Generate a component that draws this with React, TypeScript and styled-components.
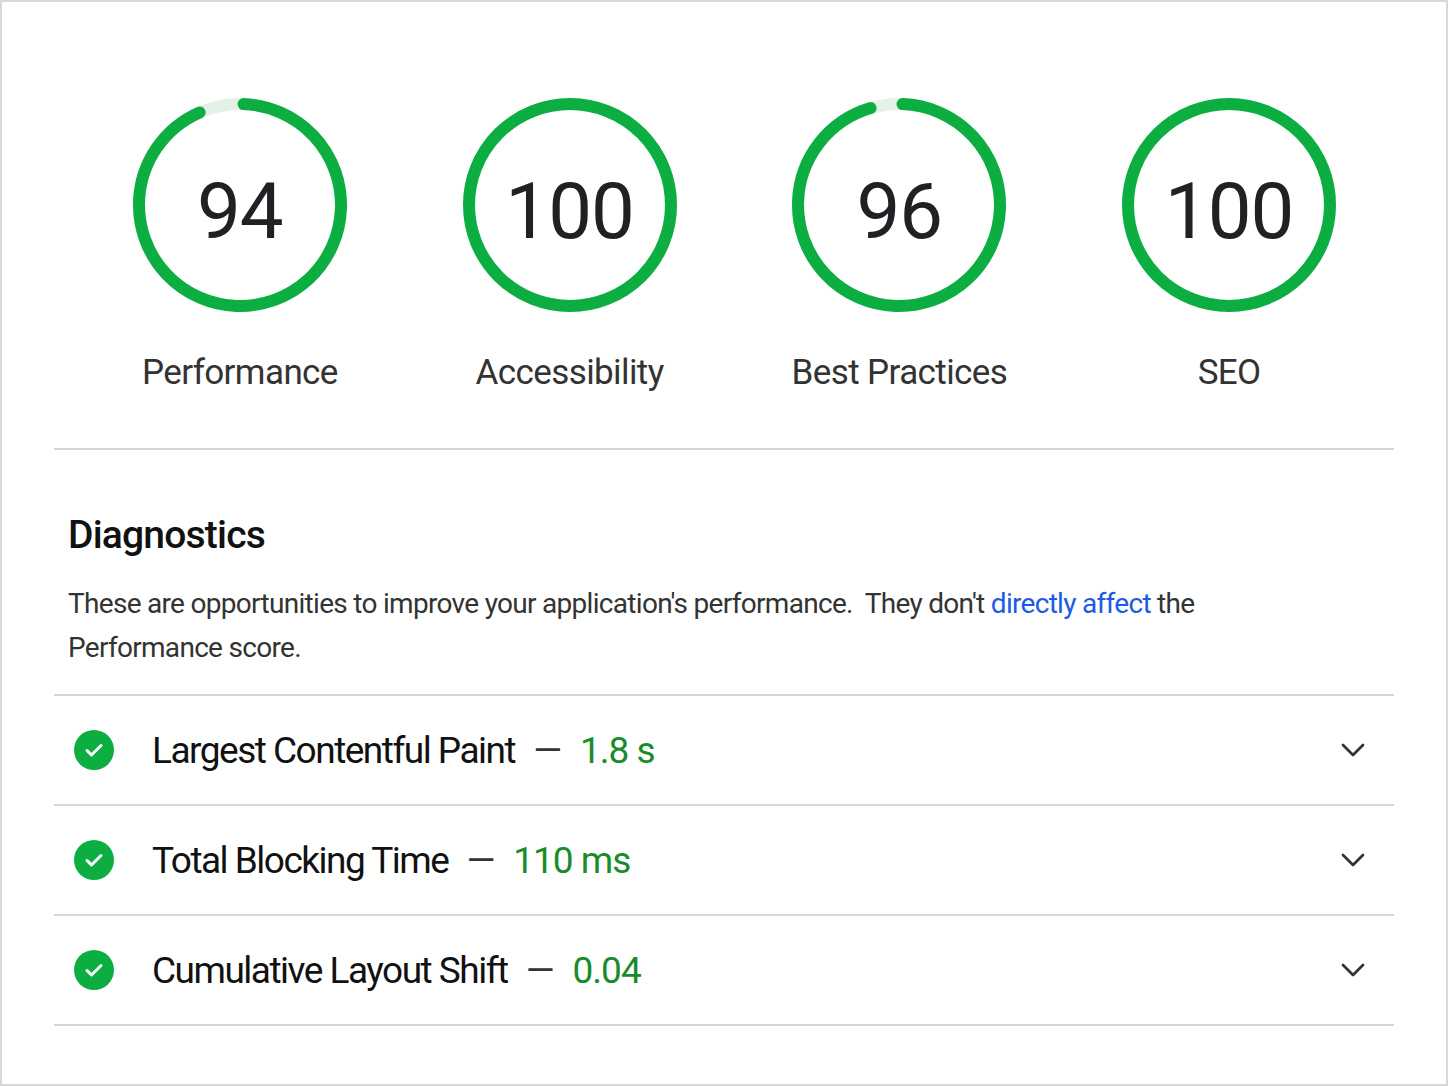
import React from "react";
import styled, { createGlobalStyle } from "styled-components";

const Global = createGlobalStyle`
  html, body { margin: 0; background: #fff; }
  body { font-family: Roboto, "Liberation Sans", sans-serif; color: #202124; }
`;

const Page = styled.div`
  box-sizing: border-box;
  width: 1448px;
  height: 1086px;
  border: 2px solid #d8d8d8;
  padding: 0 52px;
`;

const Gauges = styled.div`
  display: flex;
  padding: 92px 0 0 21px;
  height: 448px;
  box-sizing: border-box;
  border-bottom: 2px solid #d6d6d6;
`;

const Gauge = styled.div`
  width: 330px;
  display: flex;
  flex-direction: column;
  align-items: center;
`;

const Ring = styled.div`
  position: relative;
  width: 214px;
  height: 222px;
  display: flex;
  align-items: center;
  justify-content: center;
  svg { position: absolute; top: 0; left: 0; }
`;

const Score = styled.span`
  position: relative;
  top: 6px;
  font-size: 78px;
  letter-spacing: -1px;
  color: #202124;
`;

const GaugeLabel = styled.div`
  font-size: 35px;
  letter-spacing: -0.6px;
  color: #333;
  margin-top: 36px;
`;

const Section = styled.div`
  padding: 62px 0 0 14px;
`;

const Heading = styled.h2`
  margin: 0;
  font-size: 39px;
  font-weight: 500;
  letter-spacing: -0.8px;
  color: #111;
`;

const Para = styled.p`
  margin: 24px 0 24px;
  font-size: 28px;
  line-height: 44px;
  letter-spacing: -0.7px;
  color: #333;
  max-width: 1160px;
`;

const Link = styled.a`
  color: #1a5ce8;
  text-decoration: none;
`;

const Row = styled.div`
  display: flex;
  align-items: center;
  height: 108px;
  border-top: 2px solid #d6d6d6;
  padding: 0 26px 0 20px;
  &:last-child { border-bottom: 2px solid #d6d6d6; }
`;

const Check = styled.div`
  width: 40px;
  height: 40px;
  border-radius: 50%;
  background: #0cae41;
  display: flex;
  align-items: center;
  justify-content: center;
  margin-right: 38px;
`;

const Name = styled.span`
  font-size: 37px;
  letter-spacing: -1.5px;
  color: #111;
`;

const Dash = styled.span`
  font-size: 37px;
  color: #333;
  margin: 0 18px;
`;

const Value = styled.span`
  font-size: 37px;
  letter-spacing: -1px;
  color: #188c2a;
`;

const Chevron = styled.div`
  margin-left: auto;
  display: flex;
`;

const scores = [
  { v: 94, label: "Performance" },
  { v: 100, label: "Accessibility" },
  { v: 96, label: "Best Practices" },
  { v: 100, label: "SEO" },
];

const metrics = [
  { name: "Largest Contentful Paint", value: "1.8 s" },
  { name: "Total Blocking Time", value: "110 ms" },
  { name: "Cumulative Layout Shift", value: "0.04" },
];

function Arc({ v }: { v: number }) {
  const r = 101;
  const c = 2 * Math.PI * r;
  return (
    <svg width="214" height="222" viewBox="0 0 214 222">
      <g transform="rotate(-90 107 111)">
        <circle cx="107" cy="111" r={r} fill="none" stroke="#e3f1e6" strokeWidth="12" />
        <circle
          cx="107"
          cy="111"
          r={r}
          fill="none"
          stroke="#0cae41"
          strokeWidth="12"
          strokeLinecap="round"
          strokeDasharray={`${(c * v) / 100 - (v < 100 ? 8 : 0)} ${c}`}
          transform={v < 100 ? "rotate(2 107 111)" : undefined}
        />
      </g>
    </svg>
  );
}

export default function App() {
  return (
    <>
      <Global />
      <Page>
        <Gauges>
          {scores.map((s) => (
            <Gauge key={s.label}>
              <Ring>
                <Arc v={s.v} />
                <Score>{s.v}</Score>
              </Ring>
              <GaugeLabel>{s.label}</GaugeLabel>
            </Gauge>
          ))}
        </Gauges>
        <Section>
          <Heading>Diagnostics</Heading>
          <Para>
            These are opportunities to improve your application's performance.&nbsp; They don't{" "}
            <Link href="#">directly affect</Link> the Performance score.
          </Para>
        </Section>
        <div>
          {metrics.map((m) => (
            <Row key={m.name}>
              <Check>
                <svg width="24" height="24" viewBox="0 0 24 24" fill="none" stroke="#fff" strokeWidth="3" strokeLinecap="round" strokeLinejoin="round">
                  <path d="M5 12.5l4.5 4.5L19 7.5" />
                </svg>
              </Check>
              <Name>{m.name}</Name>
              <Dash>—</Dash>
              <Value>{m.value}</Value>
              <Chevron>
                <svg width="30" height="30" viewBox="0 0 24 24" fill="none" stroke="#333" strokeWidth="2.2" strokeLinecap="round" strokeLinejoin="round">
                  <path d="M4 8l8 8 8-8" />
                </svg>
              </Chevron>
            </Row>
          ))}
        </div>
      </Page>
    </>
  );
}
